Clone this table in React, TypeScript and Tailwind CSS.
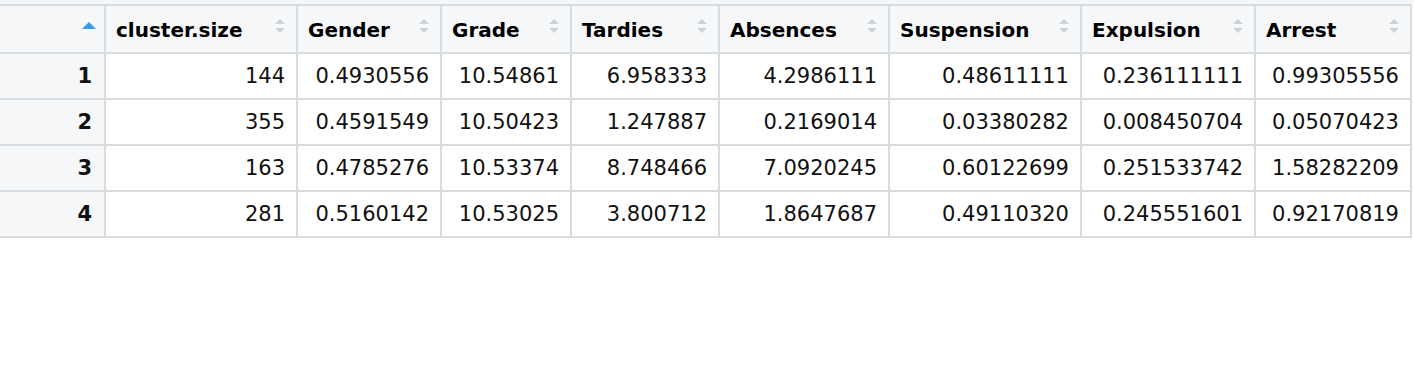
import React from 'react';

const columns = [
  { name: 'cluster.size', w: 'w-[192px]' },
  { name: 'Gender', w: 'w-[144px]' },
  { name: 'Grade', w: 'w-[130px]' },
  { name: 'Tardies', w: 'w-[148px]' },
  { name: 'Absences', w: 'w-[170px]' },
  { name: 'Suspension', w: 'w-[192px]' },
  { name: 'Expulsion', w: 'w-[174px]' },
  { name: 'Arrest', w: 'w-[156px]' },
];

const rows = [
  ['144', '0.4930556', '10.54861', '6.958333', '4.2986111', '0.48611111', '0.236111111', '0.99305556'],
  ['355', '0.4591549', '10.50423', '1.247887', '0.2169014', '0.03380282', '0.008450704', '0.05070423'],
  ['163', '0.4785276', '10.53374', '8.748466', '7.0920245', '0.60122699', '0.251533742', '1.58282209'],
  ['281', '0.5160142', '10.53025', '3.800712', '1.8647687', '0.49110320', '0.245551601', '0.92170819'],
];

const SortIcon = () => (
  <svg className="absolute top-[12px] right-[11px]" width="10" height="17" viewBox="0 0 10 17">
    <path d="M5 1 L10 6 L0 6 Z" fill="#cfd2d5" />
    <path d="M0 10 L10 10 L5 15 Z" fill="#cfd2d5" />
  </svg>
);

const App = () => {
  return (
    <div className="w-[1414px] h-[384px] bg-white" style={{ fontFamily: '"DejaVu Sans", sans-serif' }}>
      <div className="h-[4px] bg-[#f4f6f8]" />
      <div className="flex flex-col w-[1412px] border-t-2 border-[#d9dcdf] text-[#111]">
        {/* header */}
        <div className="flex h-[48px] border-b-2 border-[#d9dcdf] bg-[#f5f7f9]">
          <div className="relative w-[106px] shrink-0 border-r-2 border-[#d9dcdf]">
            <svg className="absolute top-[16px] right-[8px]" width="14" height="8" viewBox="0 0 14 8">
              <path d="M7 0 L14 7 L0 7 Z" fill="#3b9be8" />
            </svg>
          </div>
          {columns.map((c) => (
            <div
              key={c.name}
              className={`relative ${c.w} shrink-0 border-r-2 border-[#d9dcdf] pl-[10px] pt-[12px] text-[20px] font-bold leading-[24px] text-black`}
            >
              {c.name}
              <SortIcon />
            </div>
          ))}
        </div>
        {/* body */}
        {rows.map((r, i) => (
          <div key={i} className="flex h-[46px] border-b-2 border-[#d9dcdf]">
            <div className="w-[106px] shrink-0 border-r-2 border-[#d9dcdf] bg-[#f5f7f9] pr-[12px] text-right text-[21px] font-bold leading-[44px]">
              {i + 1}
            </div>
            {r.map((v, j) => (
              <div
                key={j}
                className={`${columns[j].w} shrink-0 border-r-2 border-[#d9dcdf] pr-[11px] text-right text-[21px] leading-[44px]`}
              >
                {v}
              </div>
            ))}
          </div>
        ))}
      </div>
    </div>
  );
};

export default App;
